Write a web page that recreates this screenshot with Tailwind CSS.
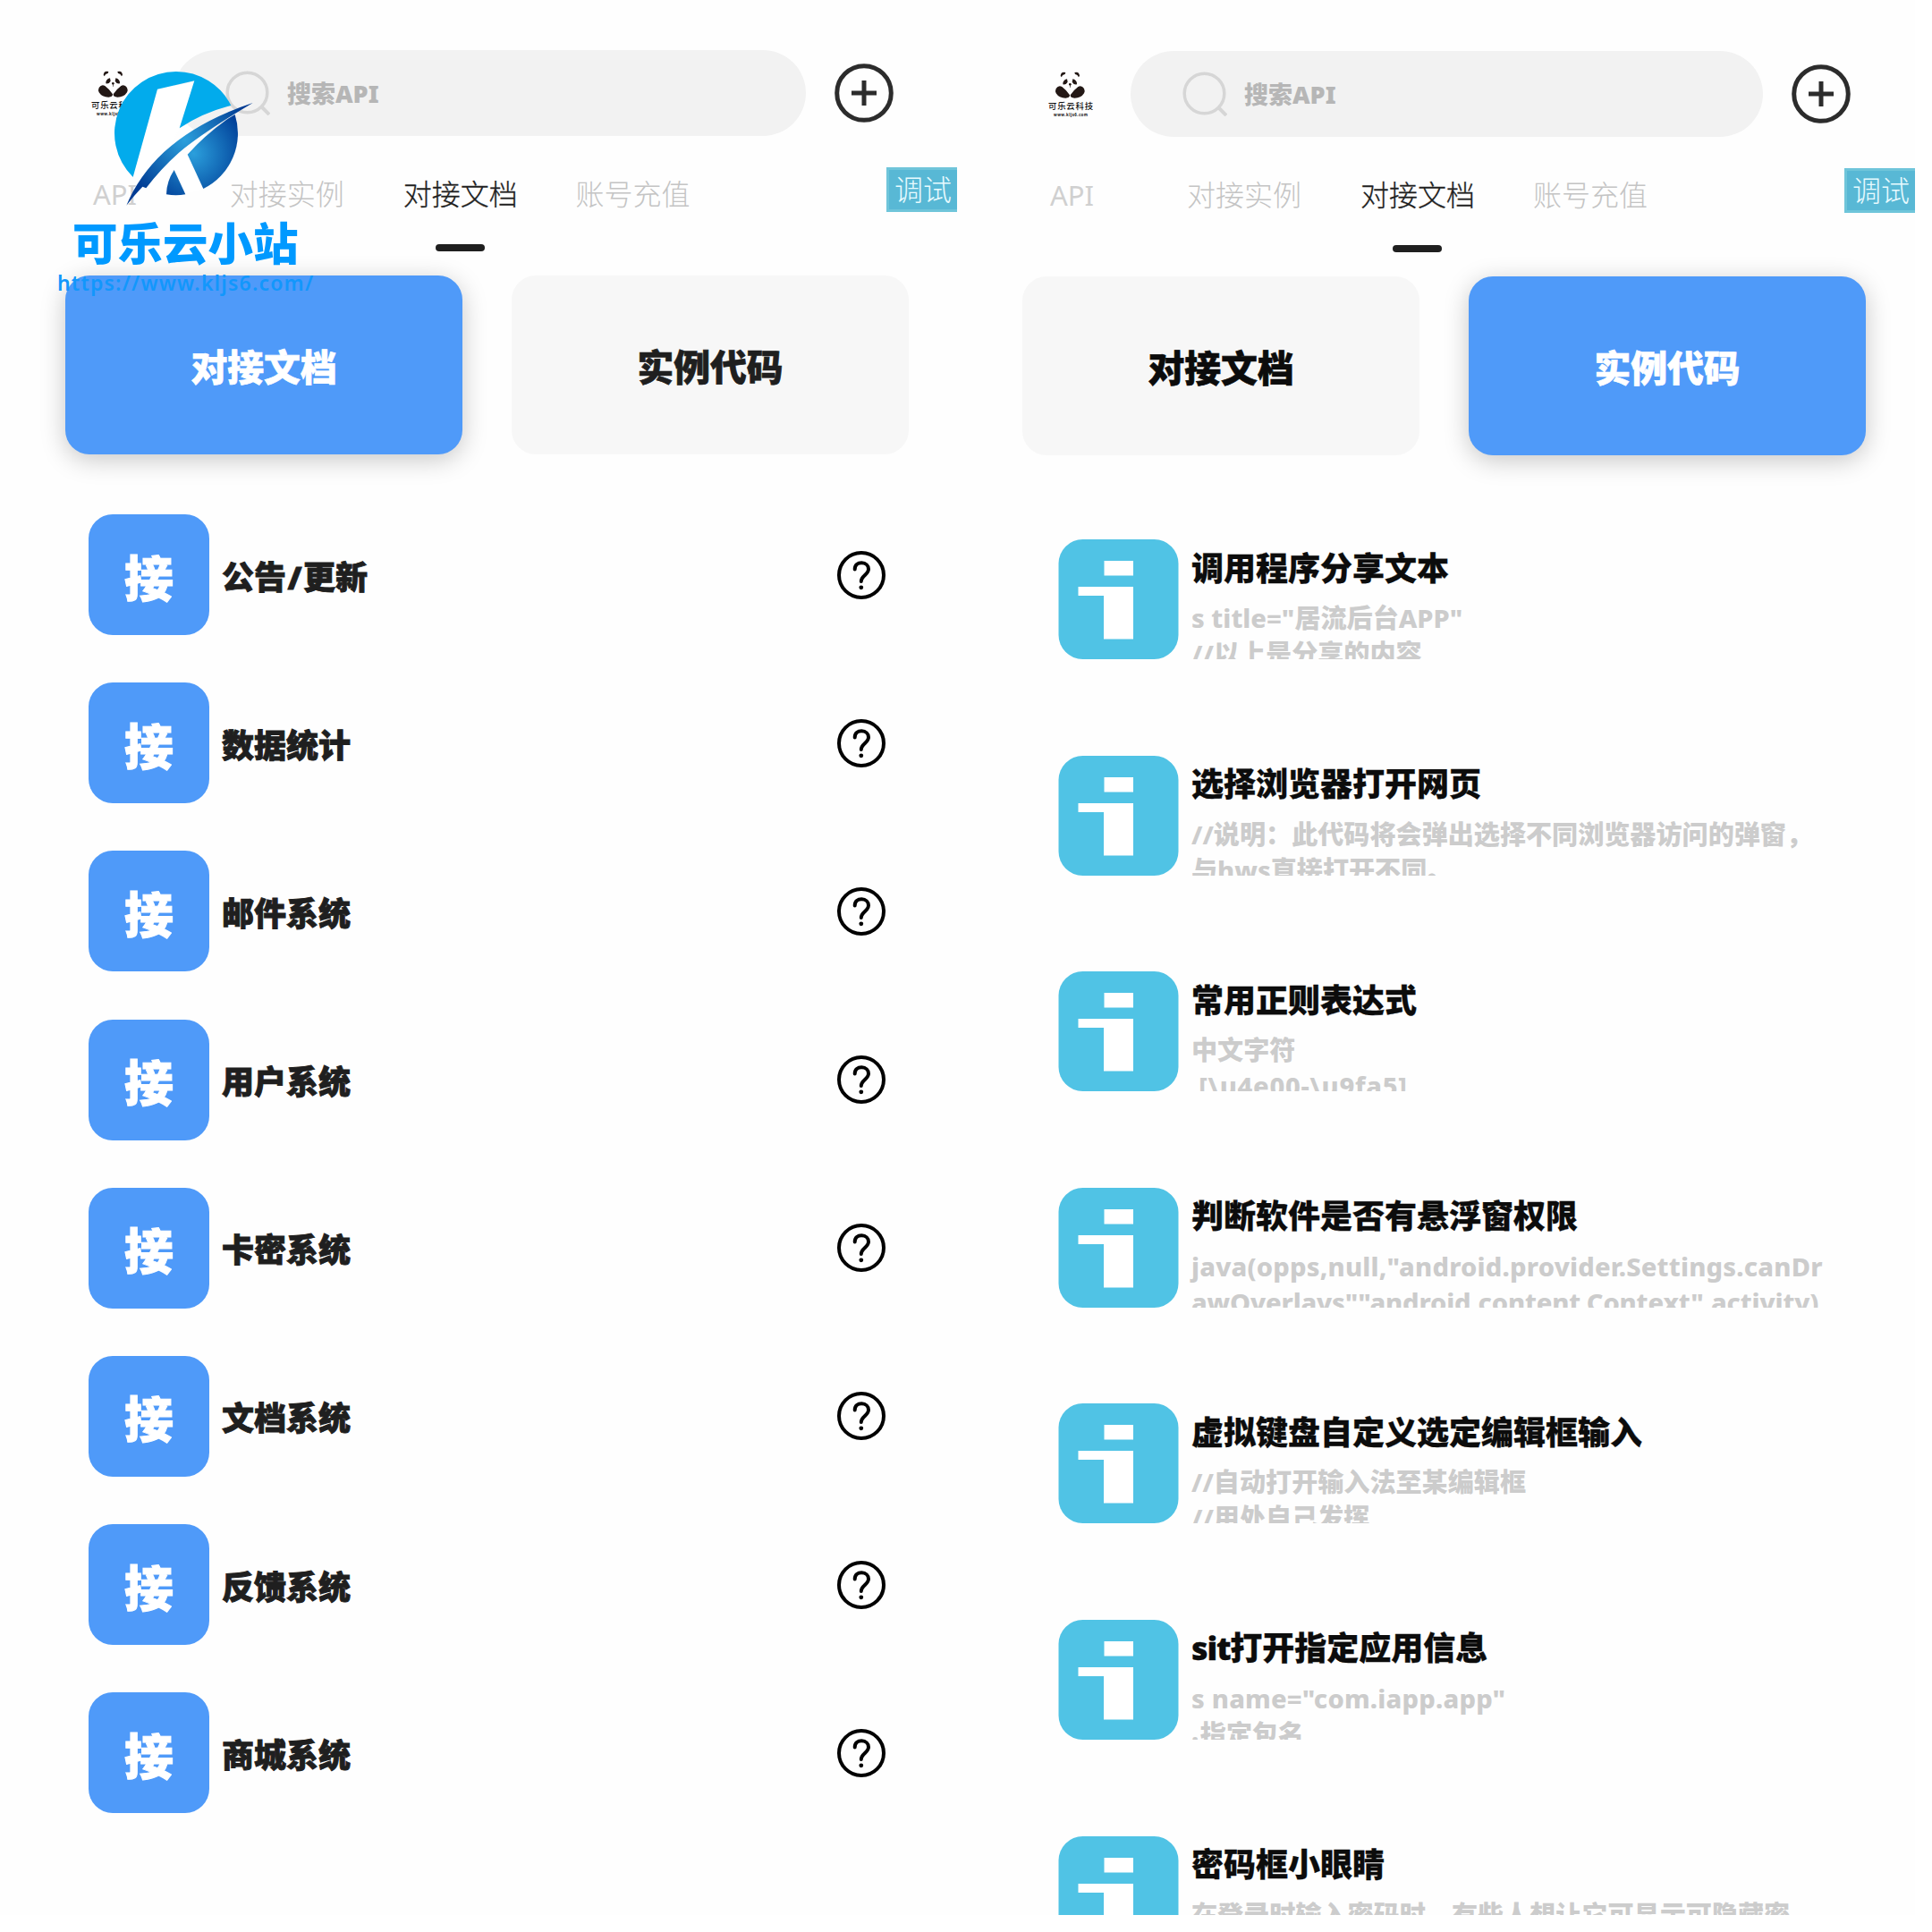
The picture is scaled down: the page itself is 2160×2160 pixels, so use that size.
<!DOCTYPE html>
<html lang="zh-CN">
<head>
<meta charset="utf-8">
<title>对接文档</title>
<script src="https://cdn.jsdelivr.net/npm/@tailwindcss/browser@4"></script>
</head>
<body class="bg-white">
<div class="relative w-[2160px] h-[2160px] overflow-hidden bg-white font-['Noto_Sans','Noto_Sans_CJK_SC',sans-serif]">
  <div id="app" class="flex h-[2141px] w-[2141px] overflow-hidden bg-[#fefefe]"></div>

  <!-- site logo overlay -->
  <svg class="absolute left-[40px] top-[40px] w-[400px] h-[320px]" viewBox="0 0 1200 960">
    <defs>
      <radialGradient id="g1" gradientUnits="userSpaceOnUse" cx="530" cy="395" r="180">
        <stop offset="0" stop-color="#2b9fdc"/><stop offset="1" stop-color="#003f98"/>
      </radialGradient>
      <radialGradient id="g2" gradientUnits="userSpaceOnUse" cx="500" cy="350" r="220">
        <stop offset="0" stop-color="#2b9fdc"/><stop offset="1" stop-color="#003b93"/>
      </radialGradient>
    </defs>
    <path fill="#fff" d="M408 180L532 153L483 309L430 410L326 474Z"/>
    <path fill="#fff" d="M430 390L509 399L562 512L501 532L464 450L438 532L380 505L326 472Z"/>
    <path fill="#02abec" d="M326 474A206.500 206.500 0 0 1 471 120A206.500 206.500 0 0 1 655 234Q560 258 482 310L532 151L408 179Z"/>
    <path fill="url(#g1)" d="M668 264A207 207 0 0 1 562 513L509 398Q565 335 640 281Z"/>
    <path fill="url(#g1)" d="M464 450L502 532Q470 538 438 532Q438 490 464 450Z"/>
    <path fill="url(#g2)" d="M304 569Q345 470 430 390Q545 285 728 225Q560 325 480 392Q420 445 370 511L358 506Q330 535 304 569Z"/>
  </svg>
  <div class="absolute left-[81px] top-[236px] h-[72px] flex items-center text-[50.500px] leading-none font-black text-[#0099ff] whitespace-nowrap">可乐云小站</div>
  <div class="absolute left-[64px] top-[299px] h-[34px] flex items-center text-[23px] tracking-[1.2px] font-semibold text-[#1297fc] whitespace-nowrap">https://www.kljs6.com/</div>
</div>

<script>
const panda = `<svg class="block w-[50px] h-[52px]" viewBox="0 0 150 156">
  <g fill="#231815"><path d="M41 18Q42 2 58 6L56 12Q46 14 45 22ZM105 18Q104 2 88 6L90 12Q100 14 101 22Z"/>
  <path d="M63 28Q48 32 49 46Q60 48 65 38ZM82 28Q97 32 96 46Q85 48 80 38Z"/><circle cx="73" cy="46" r="4"/><path d="M72 48h2v8h-2z"/>
  <path d="M26 60Q34 48 46 54Q62 66 72 82Q72 92 58 92Q36 92 26 76Q22 68 26 60ZM120 60Q112 48 100 54Q84 66 74 82Q74 92 88 92Q110 92 120 76Q124 68 120 60Z"/></g>
  <text x="0" y="130" font-size="28" font-weight="500" textLength="150" fill="#111">可乐云科技</text>
  <text x="18" y="154" font-size="13" font-weight="700" textLength="114" fill="#111">www.kljs6.com</text></svg>`;
const header = () => `
  <header class="flex items-center h-[96px] pl-[102px]">
    <div class="w-[92px]">${panda}</div>
    <div class="flex items-center w-[707px] h-[96px] rounded-full bg-[#f2f2f2] pl-[58px]">
      <svg class="w-[50px] h-[50px]" viewBox="0 0 50 50" fill="none" stroke="#d6d6d6" stroke-width="3.5"><circle cx="24.500" cy="24.500" r="22.3"/><path d="M40 40L49 49" stroke-width="4"/></svg>
      <span class="ml-[19px] pt-[1px] text-[27px] leading-none font-black text-[#b6b6b6]">搜索API</span>
    </div>
    <svg class="ml-[32px] w-[66px] h-[66px]" viewBox="0 0 66 66" fill="none" stroke="#2c2c2c" stroke-width="5"><circle cx="33" cy="33" r="30.3"/><path d="M19 33h28M33 19v28"/></svg>
  </header>
  <nav class="flex items-center h-[130px] text-[32px] font-light text-[#c4c4c4] leading-none whitespace-nowrap">
    <span class="ml-[104px] w-[153px] font-normal text-[#d0d0d0] text-[31px]">API</span>
    <span class="w-[194px]">对接实例</span>
    <span class="w-[193px] text-[#1f1f1f] [-webkit-text-stroke:0.3px] relative">对接文档<i class="absolute left-[36px] top-[72px] w-[55px] h-[8px] rounded-full bg-[#1f1f1f]"></i></span>
    <span class="w-[348px]">账号充值</span>
    <span class="-mt-[11px] w-[79px] h-[50px] border-3 border-r-0 border-[#6fc5da] bg-[#58b8d5] text-[#e8fbff] flex items-center justify-center">调试</span>
  </nav>`;
const cards = (first) => `
  <div class="flex gap-[55px] pl-[73px] text-[40.800px] font-black leading-none [-webkit-text-stroke:0.7px]">
    ${['对接文档','实例代码'].map((t,i)=>`<div class="w-[444px] h-[200px] rounded-[27px] flex items-center justify-center pt-[5px] ${(i==0)==first?'bg-[#4f9af9] text-white shadow-[0_6px_28px_rgba(0,0,0,0.22)]':'bg-[#f7f7f7] '+(first?'text-[#1f1f1f]':'text-[#0c0c0c]')}">${t}</div>`).join('')}
  </div>`;
const left = ['公告<span class="mx-[1.5px]">/</span>更新','数据统计','邮件系统','用户系统','卡密系统','文档系统','反馈系统','商城系统'];
const right = [
 ['调用程序分享文本','s title="居流后台APP"','//以上是分享的内容'],
 ['选择浏览器打开网页','//说明：此代码将会弹出选择不同浏览器访问的弹窗，','与hws直接打开不同。'],
 ['常用正则表达式','中文字符','<span class="tracking-[0.7px]">&nbsp;[\\u4e00-\\u9fa5]</span>'],
 ['判断软件是否有悬浮窗权限','<span class="tracking-[0.2px]">java(opps,null,"android.provider.Settings.canDr</span>','<span class="tracking-[-0.15px]">awOverlays""android.content.Context",activity)</span>'],
 ['虚拟键盘自定义选定编辑框输入','//自动打开输入法至某编辑框','//用处自己发挥'],
 ['<span class="tracking-[-1.2px]">sit</span>打开指定应用信息','<span class="tracking-[0.2px]">s name="com.iapp.app"</span>','<span class="relative -top-[3px] tracking-[1.500px]">.</span>指定包名'],
 ['密码框小眼睛','在登录时输入密码时，有些人想让它可显示可隐藏密','']];
document.getElementById('app').innerHTML = `
 <section class="w-[1070px] shrink-0 pt-[56px]">
  ${header()}<div class="h-[26px]"></div>${cards(true)}
  <ul class="mt-[67px] flex flex-col gap-[53.2px] pl-[99px] pr-[80px]">
  ${left.map(t=>`<li class="flex items-center h-[135px]">
    <div class="w-[135px] h-[135px] rounded-[27px] bg-[#4f9af9] text-white text-[55px] leading-none font-black [-webkit-text-stroke:1px] flex items-center justify-center pt-[5px]">接</div>
    <span class="ml-[14px] flex-1 pt-[6px] text-[36px] leading-none font-black text-[#1f1f1f] [-webkit-text-stroke:0.9px]">${t}</span>
    <svg class="w-[54px] h-[54px]" viewBox="0 0 54 54" fill="none" stroke="#000" stroke-width="4"><circle cx="27" cy="27" r="25"/><path stroke-linecap="round" d="M19.7 20.500C19.7 15.500 23 13.3 27.3 13.3C32 13.3 35 16.500 35 20.3C35 26.500 27 27.500 26.8 34"/><circle cx="26.8" cy="40.8" r="2.4" fill="#000" stroke="none"/></svg>
  </li>`).join('')}</ul>
 </section>
 <section class="w-[1071px] shrink-0 pt-[57px]">
  ${header()}<div class="h-[26px]"></div>${cards(false)}
  <ul class="mt-[94px] flex flex-col gap-[107.6px] pl-[113px]">
  ${right.map(r=>`<li class="flex h-[134px] shrink-0 overflow-hidden">
    <svg class="w-[135px] h-[134px] shrink-0" viewBox="0 0 135 134"><rect x="0.500" width="134" height="134" rx="27" fill="#50c3e5"/><path fill="#fff" d="M51.5 24H84V40.500H51.5ZM22.500 53H84V111.500H51V63H22.500Z"/></svg>
    <div class="ml-[14px] whitespace-nowrap"><div class="h-[65px] flex items-center text-[36px] leading-none font-black text-[#0c0c0c] [-webkit-text-stroke:0.3px]">${r[0]}</div>
    <div class="mt-[3px] text-[29.100px] leading-[40px] font-extrabold text-[#cccccc]">${r[1]}<br>${r[2]}</div></div>
  </li>`).join('')}</ul>
 </section>`;
</script>
</body>
</html>
